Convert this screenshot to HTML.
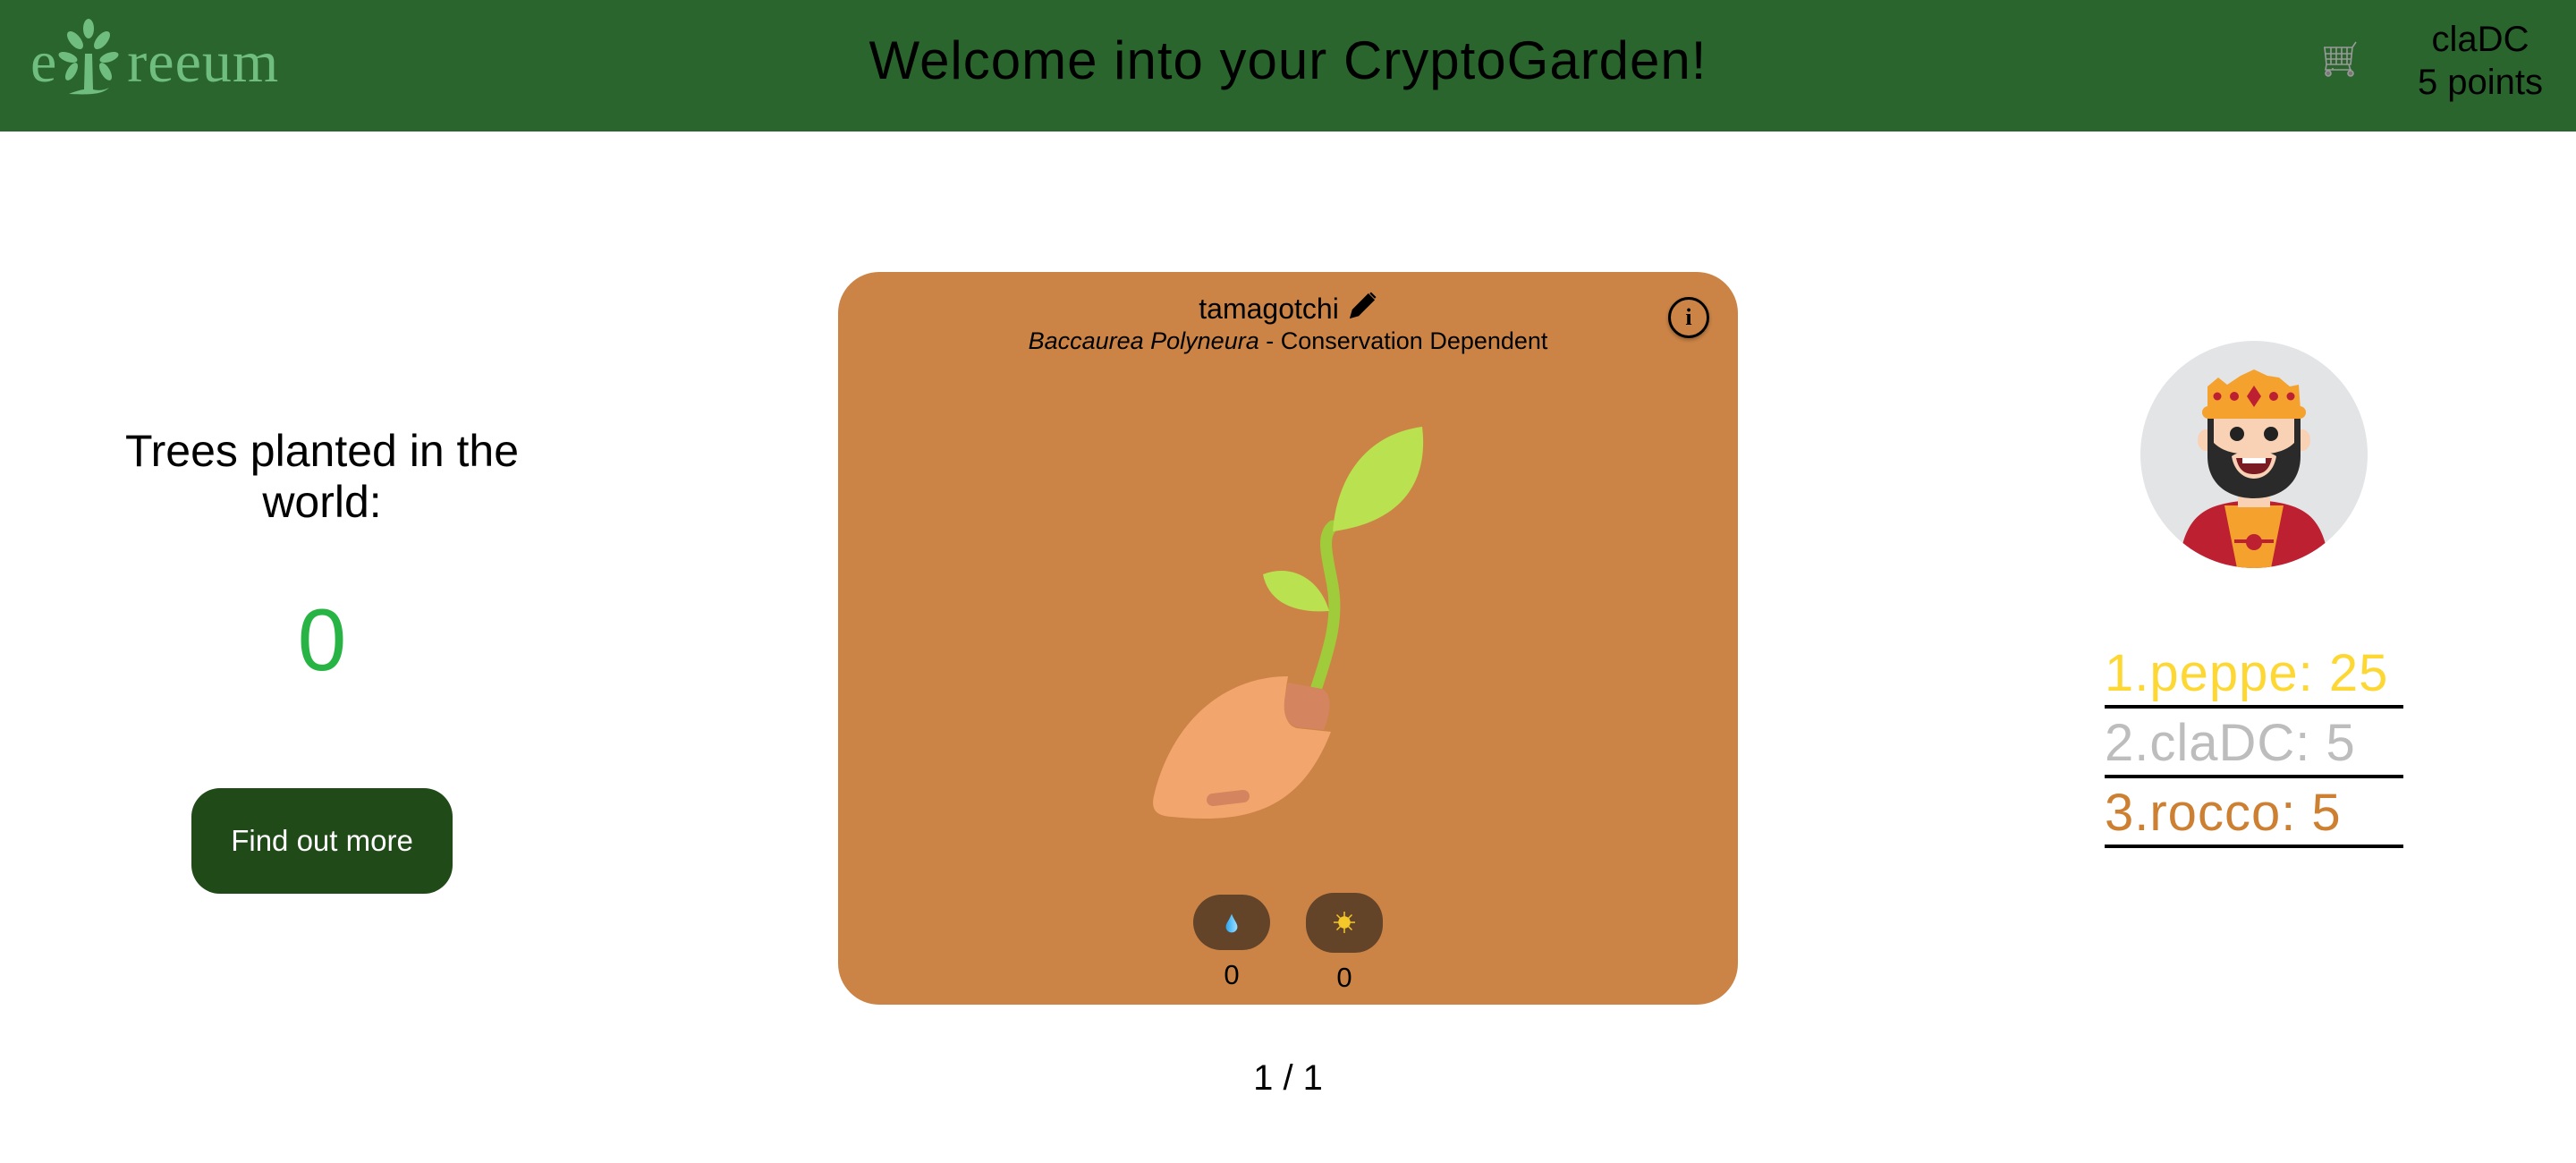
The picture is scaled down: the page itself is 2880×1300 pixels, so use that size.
<!DOCTYPE html>
<html><head><meta charset="utf-8"><style>
*{margin:0;padding:0;box-sizing:border-box}
body{width:2880px;height:1300px;background:#fff;position:relative;overflow:hidden;font-family:"Liberation Sans",sans-serif;color:#000}
.a{position:absolute}
.hdr{left:0;top:0;width:2880px;height:147px;background:#29652c}
.title{left:0;width:2880px;top:30px;text-align:center;font-size:60px;line-height:76px;letter-spacing:1px}
.user{left:2663px;width:220px;top:20px;text-align:center;font-size:40px;line-height:48px}
.card{left:937px;top:304px;width:1006px;height:819px;background:#cc8446;border-radius:46px}
.lb{left:2353px;width:334px;font-size:58px;line-height:70px;height:74px;border-bottom:4px solid #000;letter-spacing:1px}
</style></head><body>
<div class="a hdr"></div>
<div class="a" style="left:34px;top:34px;font-family:'Liberation Serif',serif;font-size:66px;color:#70bd80;line-height:72px;letter-spacing:1px">e<span style="display:inline-block;width:78px"></span>reeum</div>
<svg class="a" style="left:62px;top:20px" width="80" height="90" viewBox="0 0 80 90">
<g fill="#70bd80">
<ellipse cx="37" cy="12" rx="6" ry="11"/>
<ellipse cx="22" cy="25" rx="6" ry="12" transform="rotate(-40 22 25)"/>
<ellipse cx="52" cy="25" rx="6" ry="12" transform="rotate(40 52 25)"/>
<ellipse cx="14" cy="44" rx="5" ry="11" transform="rotate(-70 14 44)"/>
<ellipse cx="60" cy="44" rx="5" ry="11" transform="rotate(70 60 44)"/>
<ellipse cx="18" cy="60" rx="5" ry="11" transform="rotate(30 18 60)"/>
<ellipse cx="56" cy="60" rx="5" ry="11" transform="rotate(-30 56 60)"/>
<path d="M33 40 L41 40 L42 80 C50 82 56 80 60 78 C52 86 36 86 15 85 C22 82 30 80 32 80 Z"/>
</g></svg>
<div class="a title">Welcome into your CryptoGarden!</div>
<svg class="a" style="left:2596px;top:46px" width="42" height="42" viewBox="0 0 42 42" fill="none" stroke="#9a9a9a" stroke-width="1.6">
<path d="M2 7 L34 7 L38 1"/><path d="M3 7 L5 26 L32 26 L34 7"/><path d="M4 14 H34 M4 20 H33 M10 7 V26 M16 7 V26 M22 7 V26 M28 7 V26"/><path d="M5 26 L4 32 H33 M12 32 V30 M30 26 L32 33"/>
<circle cx="7" cy="36" r="3" fill="#777"/><circle cx="32" cy="36" r="3" fill="#777"/></svg>
<div class="a user">claDC<br>5 points</div>

<div class="a" style="left:60px;width:600px;top:476px;text-align:center;font-size:50px;line-height:57px">Trees planted in the<br>world:</div>
<div class="a" style="left:60px;width:600px;top:660px;text-align:center;font-size:98px;line-height:110px;color:#28b444">0</div>
<div class="a" style="left:214px;top:881px;width:292px;height:118px;border-radius:32px;background:#204a18;color:#fff;font-size:33px;line-height:118px;text-align:center">Find out more</div>

<div class="a card"></div>
<div class="a" style="left:937px;width:1006px;top:325px;text-align:center;font-size:32px;line-height:38px">tamagotchi <svg width="34" height="34" viewBox="0 0 30 30" style="vertical-align:-3px"><path d="M4 26 L6 19 L21 4 L26 9 L11 24 Z M23 2 L28 7" fill="#000" stroke="#000" stroke-width="2"/></svg></div>
<div class="a" style="left:937px;width:1006px;top:365px;text-align:center;font-size:27px;line-height:32px"><i>Baccaurea Polyneura</i> - Conservation Dependent</div>
<div class="a" style="left:1865px;top:332px;width:46px;height:46px;border:3px solid #000;border-radius:50%;text-align:center;font:bold 26px/40px 'Liberation Serif',serif;box-shadow:0 2px 4px rgba(0,0,0,.3)">i</div>

<svg class="a" style="left:1250px;top:450px" width="400" height="480" viewBox="0 0 400 480">
<path d="M222 318 C238 270 246 240 240 205 C235 175 226 150 240 138" stroke="#a0cb3a" stroke-width="13" fill="none" stroke-linecap="round"/>
<path d="M240 144 C245 80 280 35 340 27 C346 75 330 132 240 144 Z" fill="#b9e150"/>
<path d="M162 192 C192 180 225 195 236 233 C195 236 168 222 162 192 Z" fill="#b9e150"/>
<path d="M190 306 C120 306 60 355 40 440 C36 458 46 462 60 463 C150 472 205 452 238 368 L200 364 C186 360 183 345 190 306 Z" fill="#f2a66e"/>
<path d="M190 313 L228 320 C240 326 238 345 230 366 L200 363 C185 358 182 342 190 313 Z" fill="#d4845e"/>
<path d="M106 444 L140 440" stroke="#d4845e" stroke-width="14" stroke-linecap="round"/>
</svg>

<div class="a" style="left:1334px;top:1000px;width:86px;height:62px;border-radius:31px;background:#634429"></div>
<svg class="a" style="left:1369px;top:1020px" width="16" height="24" viewBox="0 0 20 28"><defs><linearGradient id="w" x1="0" x2="1"><stop offset="0" stop-color="#2aa6f0"/><stop offset="1" stop-color="#9fe0ff"/></linearGradient></defs><path d="M10 1 C13 9 18 14 18 19 A8 8 0 0 1 2 19 C2 14 7 9 10 1 Z" fill="url(#w)"/></svg>
<div class="a" style="left:1460px;top:998px;width:86px;height:67px;border-radius:31px;background:#634429"></div>
<svg class="a" style="left:1490px;top:1018px" width="26" height="26" viewBox="0 0 26 26" stroke="#f5c82a" stroke-width="1.5"><path d="M13 1V25M1 13H25M4.5 4.5L21.5 21.5M21.5 4.5L4.5 21.5"/><circle cx="13" cy="13" r="6" fill="#f5c82a"/></svg>
<div class="a" style="left:1327px;width:100px;top:1073px;text-align:center;font-size:31px;line-height:34px">0</div>
<div class="a" style="left:1453px;width:100px;top:1076px;text-align:center;font-size:31px;line-height:34px">0</div>
<div class="a" style="left:1240px;width:400px;top:1183px;text-align:center;font-size:40px;line-height:44px">1 / 1</div>

<svg class="a" style="left:2380px;top:380px" width="280" height="260" viewBox="0 0 280 260">
<defs><clipPath id="c"><circle cx="140" cy="128" r="127"/></clipPath></defs>
<circle cx="140" cy="128" r="127" fill="#e3e4e6"/>
<g clip-path="url(#c)">
<path d="M55 260 C60 200 80 185 125 180 L155 180 C200 185 220 200 225 260 Z" fill="#bd2031"/>
<path d="M107 185 L173 185 L158 260 L122 260 Z" fill="#f4a22d"/>
<rect x="122" y="165" width="36" height="22" fill="#f9d1b4"/>
<path d="M118 225 H162" stroke="#bd2031" stroke-width="4"/><circle cx="140" cy="226" r="9" fill="#bd2031"/>
</g>
<ellipse cx="86" cy="112" rx="9" ry="12" fill="#f9d1b4"/><ellipse cx="194" cy="112" rx="9" ry="12" fill="#f9d1b4"/>
<path d="M88 85 H192 V130 C192 160 170 177 140 177 C110 177 88 160 88 130 Z" fill="#2a2a2a"/>
<path d="M95 85 H185 V115 C175 125 160 128 140 128 C120 128 105 125 95 115 Z" fill="#f9d1b4"/>
<path d="M115 130 C125 122 155 122 165 130 C162 148 150 155 140 155 C130 155 118 148 115 130 Z" fill="#f9d1b4"/>
<path d="M120 132 H160 C157 146 150 150 140 150 C130 150 123 146 120 132 Z" fill="#7a1a22"/>
<rect x="127" y="132" width="26" height="6" fill="#fff"/>
<circle cx="121" cy="105" r="8" fill="#222"/><circle cx="159" cy="105" r="8" fill="#222"/>
<path d="M88 52 L100 42 L110 50 L125 40 L140 33 L155 40 L168 42 L180 52 L190 50 L192 78 L88 78 Z" fill="#f4a22d"/>
<rect x="82" y="74" width="116" height="14" rx="7" fill="#f4a22d"/>
<circle cx="99" cy="63" r="4.5" fill="#bd2031"/><circle cx="118" cy="63" r="5" fill="#bd2031"/><circle cx="162" cy="63" r="5" fill="#bd2031"/><circle cx="181" cy="63" r="4.5" fill="#bd2031"/>
<path d="M140 51 L148 63 L140 75 L132 63 Z" fill="#bd2031"/>
</svg>

<div class="a lb" style="top:718px;color:#fdd835">1.peppe: 25</div>
<div class="a lb" style="top:796px;color:#bdbdbd">2.claDC: 5</div>
<div class="a lb" style="top:874px;color:#cd7f32">3.rocco: 5</div>
</body></html>
